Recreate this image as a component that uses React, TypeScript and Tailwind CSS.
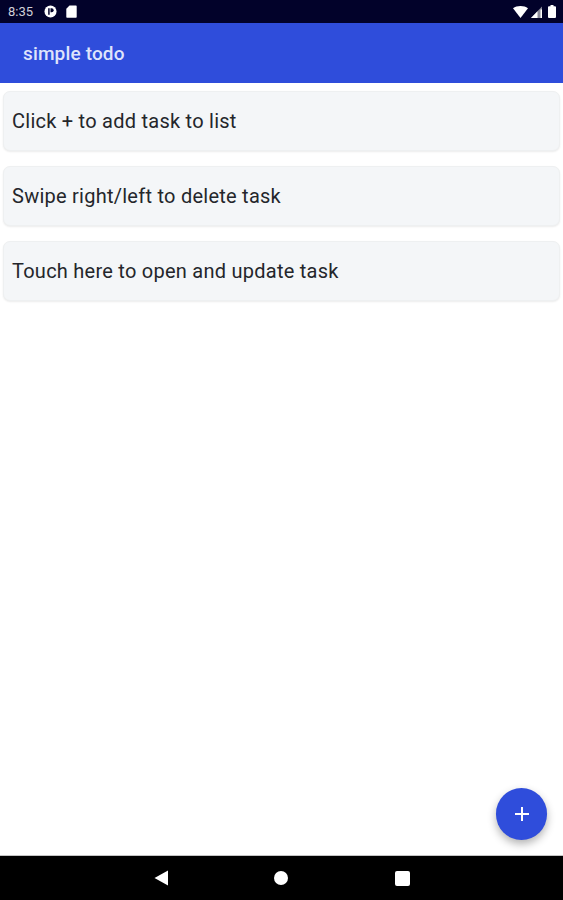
const TASKS = [
  'Click + to add task to list',
  'Swipe right/left to delete task',
  'Touch here to open and update task',
]

function StatusBar() {
  return (
    <div className="flex h-[23px] items-center justify-between bg-[#02022a] pl-2 pr-[7px] text-white">
      <div className="flex items-center">
        <span className="w-[28px] text-[13px] leading-none text-[#d0d0d8]">8:35</span>
        <svg className="ml-[8px]" width="13" height="13" viewBox="0 0 14 14">
          <circle cx="7" cy="7" r="6.5" fill="#fff" />
          <path d="M4.5 3.5h1.6v7H4.5z" fill="#02022a" />
          <path d="M7 3.5h1.2a2.2 2.2 0 0 1 0 4.4H7z" fill="#02022a" />
        </svg>
        <svg className="ml-[9px]" width="11" height="13" viewBox="0 0 11 13">
          <path d="M3.5 0.5H10a.7.7 0 0 1 .7.7v10.8a.7.7 0 0 1-.7.7H1a.7.7 0 0 1-.7-.7V3.7z" fill="#fff" />
        </svg>
      </div>
      <div className="flex items-center gap-[2px]">
        <svg width="15" height="12" viewBox="0 0 15 12">
          <path d="M0 2.2C2 .8 4.6 0 7.5 0S13 .8 15 2.2L7.5 12z" fill="#fff" />
        </svg>
        <svg width="13" height="12" viewBox="0 0 12 12">
          <path d="M0.5 12L11.5 0.5V12z" fill="#8a8a99" />
          <path d="M0.5 12L7 5.2V12z" fill="#fff" />
          <path d="M10 3.5h1.5V12H10z" fill="#fff" />
        </svg>
        <svg className="ml-[3px]" width="8" height="13" viewBox="0 0 8 13">
          <path d="M2.5 0h3v1.2H7a1 1 0 0 1 1 1V12a1 1 0 0 1-1 1H1a1 1 0 0 1-1-1V2.2a1 1 0 0 1 1-1h1.5z" fill="#fff" />
        </svg>
      </div>
    </div>
  )
}

function TaskCard({ text }: { text: string }) {
  return (
    <div className="flex h-[60px] items-center rounded-[7px] border border-[#eef0f1] bg-[#f4f6f8] pl-2 text-[20px] tracking-[0.25px] text-[#24262b] shadow-[0_1px_2px_rgba(0,0,0,0.08)]">
      {text}
    </div>
  )
}

function NavBar() {
  return (
    <div className="flex h-[45px] items-center justify-center border-t border-[#c4c4c4] bg-black">
      <div className="grid w-[256px] grid-cols-[14px_1fr_15px] items-center">
        <svg width="14" height="16" viewBox="0 0 14 16">
          <path d="M14 0.5V15.5L0.5 8z" fill="#fff" />
        </svg>
        <div className="mx-auto h-[14px] w-[14px] rounded-full bg-white" />
        <div className="h-[15px] w-[15px] rounded-[2px] bg-white" />
      </div>
    </div>
  )
}

export default function App() {
  return (
    <div className="flex h-[900px] w-[563px] flex-col overflow-hidden bg-white font-['Roboto',sans-serif]">
      <StatusBar />
      <header className="flex h-[60px] items-center bg-[#2f4ddb] pl-[23px] pt-[2px] text-[19px] font-medium tracking-[0.15px] text-[#dfe4fb]">
        simple todo
      </header>
      <main className="relative flex flex-1 flex-col gap-[15px] px-[3px] pt-2">
        {TASKS.map((t) => (
          <TaskCard key={t} text={t} />
        ))}
        <button className="absolute bottom-[15px] right-[16px] flex h-[52px] w-[51px] items-center justify-center rounded-full bg-[#2f4ddb] shadow-[0_4px_8px_rgba(0,0,0,0.3)]">
          <svg width="14" height="14" viewBox="0 0 14 14">
            <path d="M6 0h2v14H6zM0 6h14v2H0z" fill="#fff" />
          </svg>
        </button>
      </main>
      <NavBar />
    </div>
  )
}
